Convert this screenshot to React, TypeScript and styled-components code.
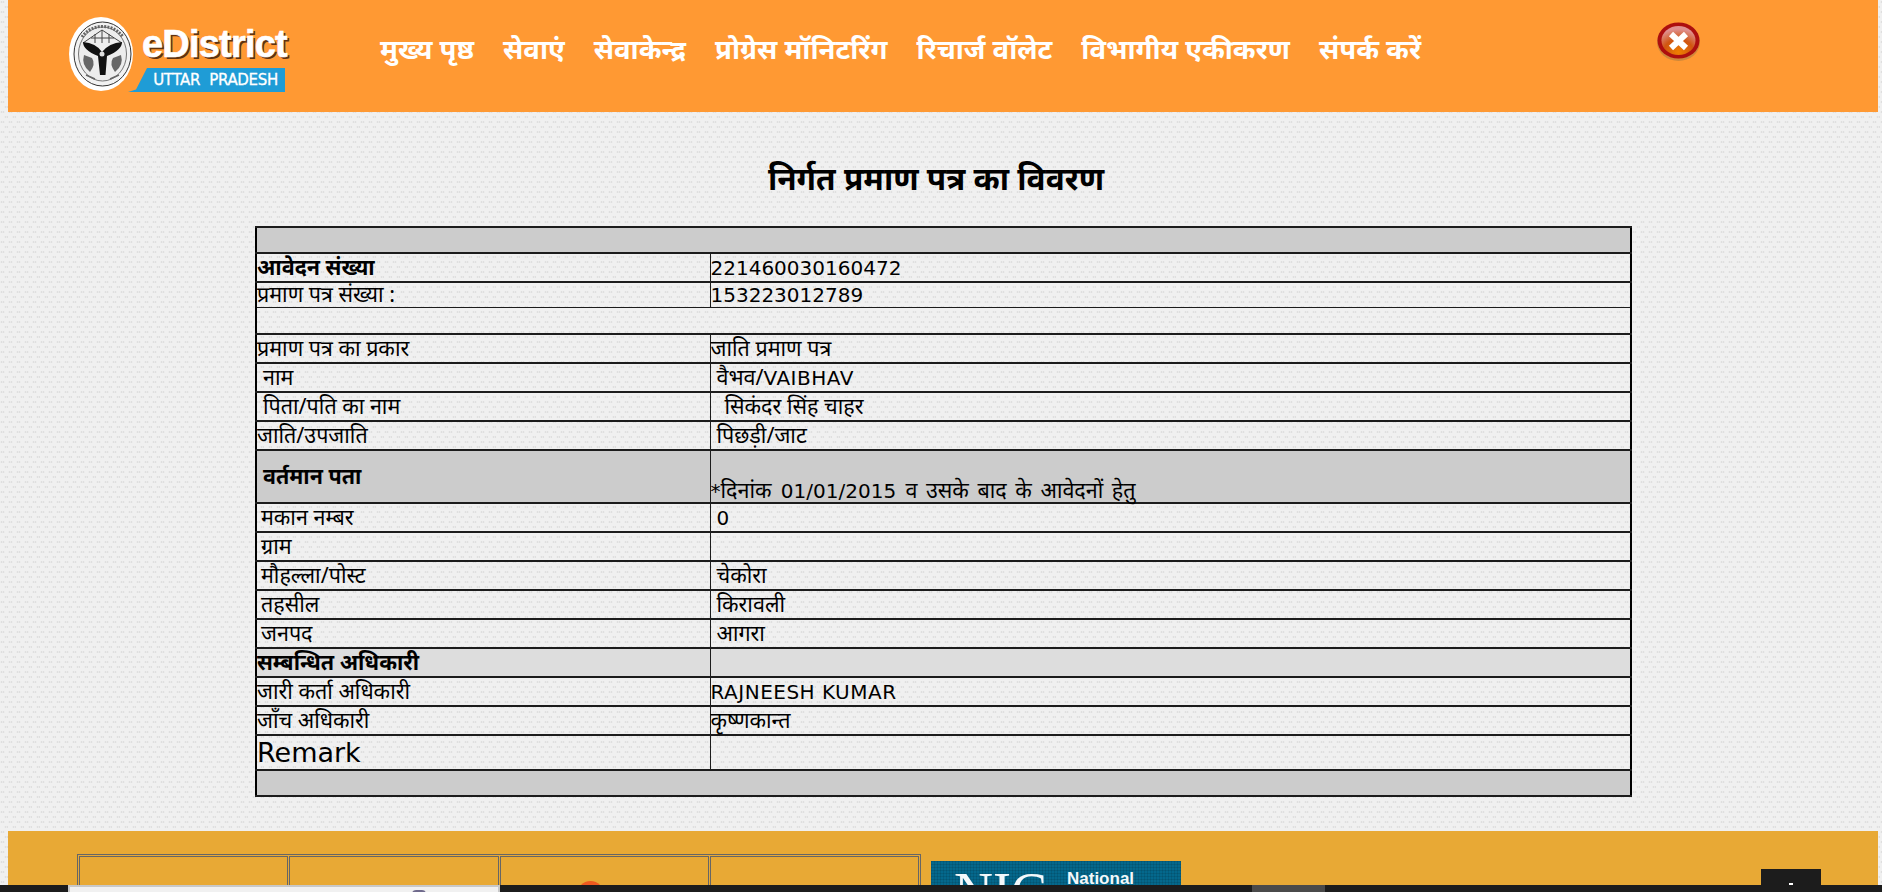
import React from 'react';
import styled, { createGlobalStyle } from 'styled-components';

const HINDI = `"Noto Sans", "Noto Sans Devanagari", "Lohit Devanagari", "DejaVu Sans", sans-serif`;

const GlobalStyle = createGlobalStyle`
  html, body {
    margin: 0;
    height: 100%;
    overflow: hidden;
  }
  body {
    padding: 0 4px 0 8px;
    background-color: #f0f0f0;
    background-image:
      radial-gradient(circle at 1.5px 2px, #dfdfdf 0.7px, transparent 1.2px),
      radial-gradient(circle at 3.5px 2px, #dfdfdf 0.7px, transparent 1.2px),
      radial-gradient(circle at 5.5px 7px, #dfdfdf 0.7px, transparent 1.2px),
      radial-gradient(circle at 7.5px 7px, #dfdfdf 0.7px, transparent 1.2px);
    background-size: 8px 10px;
    font-family: "DejaVu Sans", sans-serif;
    color: #000;
  }
`;

const Header = styled.header`
  height: 112px;
  background: #ff9933;
  display: flex;
  align-items: flex-start;
`;

const Logo = styled.div`
  width: 232px;
  height: 76px;
  margin: 17px 0 0 61px;
  display: flex;
  flex-shrink: 0;
`;

const LogoText = styled.div`
  width: 159px;
  margin-left: -5px;
  display: flex;
  flex-direction: column;
  align-items: flex-start;
`;

const LogoTitle = styled.div`
  font-family: "Liberation Sans", sans-serif;
  font-size: 38px;
  font-weight: 700;
  line-height: 38px;
  margin: 8px 0 0 14px;
  color: #fff;
  -webkit-text-stroke: 0.6px #fff;
  text-shadow: 2px 2px 0 #5f3210;
  letter-spacing: -0.8px;
`;

const LogoBadge = styled.div`
  margin-top: 5px;
  width: 157px;
  height: 24px;
  padding-right: 7px;
  box-sizing: border-box;
  background: #1f9cd6;
  clip-path: polygon(19px 0, 100% 0, 100% 100%, 0 100%, 8px 90%);
  color: #fff;
  font-family: "DejaVu Sans", sans-serif;
  font-size: 15px;
  line-height: 24px;
  letter-spacing: -0.3px;
  -webkit-text-stroke: 0.3px #fff;
  text-align: right;
  white-space: pre;
`;

const Nav = styled.nav`
  display: flex;
  gap: 29px;
  margin: 29px 0 0 79px;
`;

const NavLink = styled.a`
  color: #fff;
  font-family: ${HINDI};
  font-size: 27.5px;
  font-weight: 700;
  line-height: 40px;
  white-space: nowrap;
`;

const CloseIcon = styled.div`
  margin: 22px 178px 0 auto;
  width: 43px;
  height: 39px;
`;

const Main = styled.main`
  height: 719px;
  display: flex;
  flex-direction: column;
  align-items: center;
`;

const Title = styled.h1`
  margin: 44px 14px 0 0;
  height: 70px;
  font-family: ${HINDI};
  font-size: 31.6px;
  font-weight: 700;
  line-height: 44px;
`;

const DetailTable = styled.table`
  width: 1377px;
  margin-left: 1px;
  border-collapse: collapse;
  table-layout: fixed;
  border: 2px solid #000;
`;

const Row = styled.tr<{ $height: number; $bg?: string }>`
  height: ${p => p.$height}px;
  background: ${p => p.$bg ?? 'transparent'};
`;

const Cell = styled.td<{
  $big?: boolean;
  $bold?: boolean;
  $indent?: number;
  $bottom?: boolean;
  $thin?: 'top' | 'bottom';
}>`
  border-style: solid;
  border-color: #1c1c1c;
  border-width: ${p => (p.$thin === 'top' ? 1 : 2)}px 1px ${p => (p.$thin === 'bottom' ? 1 : 2)}px;
  padding: 0 0 0 ${p => p.$indent ?? 0}px;
  font-family: "DejaVu Sans", sans-serif;
  font-size: ${p => (p.$big ? 27 : 20)}px;
  font-weight: ${p => (p.$bold ? 700 : 400)};
  line-height: 22px;
  word-spacing: ${p => (p.$bottom ? 3 : 0)}px;
  vertical-align: ${p => (p.$bottom ? 'bottom' : 'middle')};
  white-space: nowrap;
`;

const Hi = styled.span`
  font-family: ${HINDI};
  font-size: 21.5px;
`;

const Caps = styled.span`
  letter-spacing: 0.5px;
`;

const Footer = styled.footer`
  height: 200px;
  background: #e8a935;
  padding: 23px 0 0 69px;
  display: flex;
  align-items: flex-start;
  gap: 10px;
`;

const PartnerTable = styled.div`
  display: grid;
  grid-template-columns: repeat(4, 1fr);
  gap: 1px;
  width: 844px;
  height: 120px;
  box-sizing: border-box;
  border: 1px solid #666;
  padding: 1px;
`;

const PartnerCell = styled.div`
  border: 1px solid #666;
  position: relative;
`;

const RedDot = styled.span`
  position: absolute;
  top: 24px;
  left: 76px;
  width: 27px;
  height: 27px;
  border-radius: 50%;
  background: #ee5a1f;
`;

const NicBanner = styled.div`
  width: 250px;
  height: 100px;
  margin-top: 7px;
  padding-left: 23px;
  box-sizing: border-box;
  display: flex;
  gap: 20px;
  color: #f4f8fa;
  background-color: #04688c;
  background-image:
    repeating-linear-gradient(0deg, rgba(0, 0, 0, 0.1) 0 1px, transparent 1px 3px),
    repeating-linear-gradient(90deg, rgba(0, 0, 0, 0.1) 0 1px, transparent 1px 3px);
`;

const NicMark = styled.span`
  font-family: "Liberation Serif", serif;
  font-size: 54px;
  line-height: 60px;
  margin-top: 1px;
`;

const NicName = styled.span`
  font-family: "Liberation Sans", sans-serif;
  font-size: 17px;
  font-weight: 700;
  line-height: 20px;
  margin-top: 8px;
`;

const BottomBar = styled.div`
  position: fixed;
  left: 0;
  right: 0;
  bottom: 0;
  height: 7px;
  background: #1c1c1c;
`;

const BarTab = styled.div`
  position: absolute;
  top: 0;
  left: 1252px;
  width: 73px;
  height: 7px;
  background: #4a4a4a;
`;

const Popup = styled.div`
  position: absolute;
  left: 68px;
  top: 0;
  width: 432px;
  height: 7px;
  box-sizing: border-box;
  background: #f1f1f1;
  border: 2px solid #c8c8c8;
  border-bottom: 0;
  overflow: hidden;
`;

const PopupThumb = styled.span`
  position: absolute;
  left: 342px;
  top: 3px;
  width: 14px;
  height: 4px;
  background: #6f6a8c;
  border-radius: 6px 6px 0 0;
`;

const ChatTab = styled.div`
  position: fixed;
  left: 1761px;
  bottom: 7px;
  width: 60px;
  height: 16px;
  background: #1c1c1c;
`;

const ChatDot = styled.span`
  position: absolute;
  left: 28px;
  bottom: 0;
  width: 4px;
  height: 2px;
  background: #fff;
`;

function Emblem() {
  return (
    <svg width="64" height="74" viewBox="0 0 64 74">
      <ellipse cx="32" cy="37" rx="32" ry="37" fill="#fff" />
      <ellipse cx="33.5" cy="37" rx="28.5" ry="32" fill="#f2f2f2" stroke="#333" strokeWidth="1" />
      <ellipse cx="33.5" cy="37" rx="24" ry="27" fill="#ededed" stroke="#555" strokeWidth="0.8" />
      <path d="M13 24 A24 22 0 0 1 54 24" fill="none" stroke="#666" strokeWidth="3" strokeDasharray="2 1.2" transform="translate(0 -4)" />
      <path d="M14 26 L33 13 L53 26 M22 21 H45 M33 13 V26 M26 17 V26 M40 17 V26" fill="none" stroke="#444" strokeWidth="1" />
      <path d="M14 25 Q27 26 33 35 Q40 26 53 25 Q53 33 38 39 L36.5 58 H31 L29 39 Q14 33 14 25Z" fill="#111" />
      <path d="M15 38 Q12 48 21 55 Q27 47 23 41Z M52 38 Q55 48 46 55 Q40 47 44 41Z" fill="#666" />
      <path d="M17 58 L26 62 M50 58 L41 62" stroke="#666" strokeWidth="1.5" />
      <circle cx="33" cy="37" r="2.5" fill="#ddd" />
    </svg>
  );
}

function CloseGlyph() {
  return (
    <svg width="43" height="39" viewBox="0 0 43 39">
      <defs>
        <radialGradient id="closeFill" cx="50%" cy="90%" r="80%">
          <stop offset="0%" stopColor="#f08000" />
          <stop offset="55%" stopColor="#d05510" />
          <stop offset="100%" stopColor="#e09090" />
        </radialGradient>
      </defs>
      <ellipse cx="21.5" cy="20" rx="21.5" ry="19" fill="#a87a40" opacity="0.55" />
      <ellipse cx="21.5" cy="18.5" rx="21" ry="18" fill="#ad0f0f" />
      <ellipse cx="21.5" cy="18.5" rx="17" ry="14.5" fill="url(#closeFill)" />
      <path d="M14 12 L29 26 M29 12 L14 26" stroke="#fff" strokeWidth="6" />
    </svg>
  );
}

const NAV_ITEMS = ['मुख्य पृष्ठ', 'सेवाएं', 'सेवाकेन्द्र', 'प्रोग्रेस मॉनिटरिंग', 'रिचार्ज वॉलेट', 'विभागीय एकीकरण', 'संपर्क करें'];

const ROWS_AFTER = [
  { a: 'प्रमाण पत्र का प्रकार', b: <Hi>जाति प्रमाण पत्र</Hi> },
  { a: 'नाम', b: <><Hi>वैभव/</Hi><Caps>VAIBHAV</Caps></>, ai: 6, bi: 6 },
  { a: 'पिता/पति का नाम', b: <Hi>सिकंदर सिंह चाहर</Hi>, ai: 6, bi: 14 },
  { a: 'जाति/उपजाति', b: <Hi>पिछड़ी/जाट</Hi>, bi: 6 },
];

const ADDRESS = [
  { a: 'मकान नम्बर', b: '0' },
  { a: 'ग्राम', b: '' },
  { a: 'मौहल्ला/पोस्ट', b: <Hi>चेकोरा</Hi> },
  { a: 'तहसील', b: <Hi>किरावली</Hi> },
  { a: 'जनपद', b: <Hi>आगरा</Hi> },
];

export default function App() {
  return (
    <>
      <GlobalStyle />
      <Header>
        <Logo>
          <Emblem />
          <LogoText>
            <LogoTitle>eDistrict</LogoTitle>
            <LogoBadge>{'UTTAR  PRADESH'}</LogoBadge>
          </LogoText>
        </Logo>
        <Nav>
          {NAV_ITEMS.map(item => (
            <NavLink key={item}>{item}</NavLink>
          ))}
        </Nav>
        <CloseIcon>
          <CloseGlyph />
        </CloseIcon>
      </Header>

      <Main>
        <Title>निर्गत प्रमाण पत्र का विवरण</Title>
        <DetailTable>
          <colgroup>
            <col style={{ width: 454 }} />
            <col />
          </colgroup>
          <tbody>
            <Row $height={26} $bg="#cccccc">
              <Cell colSpan={2} />
            </Row>
            <Row $height={29}>
              <Cell $bold><Hi>आवेदन संख्या</Hi></Cell>
              <Cell>221460030160472</Cell>
            </Row>
            <Row $height={25}>
              <Cell $thin="bottom"><Hi>प्रमाण पत्र संख्या :</Hi></Cell>
              <Cell $thin="bottom">153223012789</Cell>
            </Row>
            <Row $height={27}>
              <Cell colSpan={2} $thin="top" />
            </Row>
            {ROWS_AFTER.map(r => (
              <Row key={r.a} $height={29}>
                <Cell $indent={r.ai}><Hi>{r.a}</Hi></Cell>
                <Cell $indent={r.bi}>{r.b}</Cell>
              </Row>
            ))}
            <Row $height={53} $bg="#cccccc">
              <Cell $bold $indent={6}><Hi>वर्तमान पता</Hi></Cell>
              <Cell $bottom>*<Hi>दिनांक</Hi> 01/01/2015 <Hi>व उसके बाद के आवेदनों हेतु</Hi></Cell>
            </Row>
            {ADDRESS.map(r => (
              <Row key={r.a} $height={29}>
                <Cell $indent={4}><Hi>{r.a}</Hi></Cell>
                <Cell $indent={6}>{r.b}</Cell>
              </Row>
            ))}
            <Row $height={29} $bg="#dddddd">
              <Cell $bold><Hi>सम्बन्धित अधिकारी</Hi></Cell>
              <Cell />
            </Row>
            <Row $height={29}>
              <Cell><Hi>जारी कर्ता अधिकारी</Hi></Cell>
              <Cell><Caps>RAJNEESH KUMAR</Caps></Cell>
            </Row>
            <Row $height={29}>
              <Cell><Hi>जाँच अधिकारी</Hi></Cell>
              <Cell><Hi>कृष्णकान्त</Hi></Cell>
            </Row>
            <Row $height={35}>
              <Cell $big>Remark</Cell>
              <Cell />
            </Row>
            <Row $height={26} $bg="#cccccc">
              <Cell colSpan={2} />
            </Row>
          </tbody>
        </DetailTable>
      </Main>

      <Footer>
        <PartnerTable>
          <PartnerCell />
          <PartnerCell />
          <PartnerCell>
            <RedDot />
          </PartnerCell>
          <PartnerCell />
        </PartnerTable>
        <NicBanner>
          <NicMark>NIC</NicMark>
          <NicName>National</NicName>
        </NicBanner>
      </Footer>

      <ChatTab>
        <ChatDot />
      </ChatTab>
      <BottomBar>
        <Popup>
          <PopupThumb />
        </Popup>
        <BarTab />
      </BottomBar>
    </>
  );
}
